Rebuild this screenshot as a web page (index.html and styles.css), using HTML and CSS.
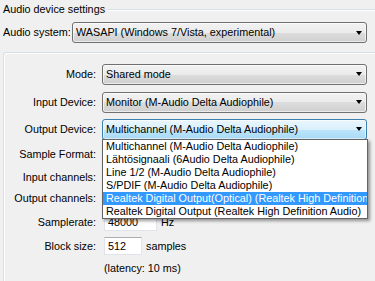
FILE: index.html
```html
<!DOCTYPE html>
<html lang="en">
<head>
    <meta charset="UTF-8">
    <title>Audio device settings</title>
    <link rel="stylesheet" href="styles.css">
</head>
<body>
    <!-- Outer group: title with etched line -->
    <div class="group-title">
        <span class="group-caption">Audio device settings</span>
        <span class="etched-line"></span>
    </div>

    <div class="system-row">
        <span class="system-label">Audio system:</span>
        <div class="combo system-combo">
            <span class="combo-text">WASAPI (Windows 7/Vista, experimental)</span>
            <span class="combo-arrow"></span>
        </div>
    </div>

    <!-- Inner group box (continues past the window edge) -->
    <div class="device-box">
        <div class="form">
            <span class="label">Mode:</span>
            <div class="combo">
                <span class="combo-text">Shared mode</span>
                <span class="combo-arrow"></span>
            </div>

            <span class="label">Input Device:</span>
            <div class="combo">
                <span class="combo-text">Monitor (M-Audio Delta Audiophile)</span>
                <span class="combo-arrow"></span>
            </div>

            <span class="label">Output Device:</span>
            <div class="combo combo-hot">
                <span class="combo-text">Multichannel (M-Audio Delta Audiophile)</span>
                <span class="combo-arrow"></span>
            </div>

            <span class="label">Sample Format:</span>
            <div class="field"></div>

            <span class="label">Input channels:</span>
            <div class="field"></div>

            <span class="label">Output channels:</span>
            <div class="field"></div>

            <span class="label">Samplerate:</span>
            <div class="field">
                <span class="textbox rate-box">48000</span>
                <span class="unit">Hz</span>
            </div>

            <span class="label">Block size:</span>
            <div class="field">
                <span class="textbox block-box">512</span>
                <span class="unit">samples</span>
            </div>

            <span class="label"></span>
            <div class="field latency">(latency: 10 ms)</div>
        </div>
    </div>

    <!-- Open dropdown of the Output Device combo -->
    <ul class="dropdown-list">
        <li>Multichannel (M-Audio Delta Audiophile)</li>
        <li>Lähtösignaali (6Audio Delta Audiophile)</li>
        <li>Line 1/2 (M-Audio Delta Audiophile)</li>
        <li>S/PDIF (M-Audio Delta Audiophile)</li>
        <li class="selected">Realtek Digital Output(Optical) (Realtek High Definition</li>
        <li>Realtek Digital Output (Realtek High Definition Audio)</li>
    </ul>
</body>
</html>
```

FILE: styles.css
```css
body {
    margin: 0;
    width: 375px;
    height: 281px;
    overflow: hidden;
    position: relative;
    background: #f0f0f0;
    color: #000;
    font-family: "Liberation Sans", Arial, sans-serif;
    font-size: 10.8px;
    line-height: 13px;
}

/* Group title with etched line */
.group-title {
    display: flex;
    align-items: center;
    height: 18px;
    padding-left: 3px;
}

.group-caption {
    white-space: nowrap;
    padding-right: 3px;
}

.etched-line {
    flex: 1;
    height: 0;
    border-top: 1px solid #d5dfe5;
    border-bottom: 1px solid #ffffff;
    margin-top: 1px;
}

/* Audio system row */
.system-row {
    display: flex;
    align-items: center;
    margin-top: 4px;
    padding-left: 3px;
}

.system-label {
    width: 69px;
    white-space: nowrap;
}

.system-combo {
    width: 295px;
}

/* Combo boxes (Windows 7 look) */
.combo {
    box-sizing: border-box;
    height: 21px;
    border: 1px solid #707070;
    border-radius: 3px;
    background: linear-gradient(to bottom, #f2f2f2 0%, #ebebeb 50%, #dddddd 50%, #cfcfcf 100%);
    display: flex;
    align-items: center;
    padding: 0 4px 0 3px;
    box-shadow: inset 0 0 0 1px rgba(255, 255, 255, 0.6);
}

.combo-hot {
    border-color: #3c7fb1;
    background: linear-gradient(to bottom, #eaf6fd 0%, #d9f0fc 50%, #bee6fd 50%, #a7d9f5 100%);
}

.combo-text {
    flex: 1;
    white-space: nowrap;
    overflow: hidden;
}

.combo-arrow {
    width: 0;
    height: 0;
    border-left: 3.5px solid transparent;
    border-right: 3.5px solid transparent;
    border-top: 4px solid #000;
    margin-left: 4px;
}

/* Inner group box, open to the right and bottom */
.device-box {
    box-sizing: border-box;
    height: 229px;
    margin-top: 9px;
    margin-left: 3px;
    border-top: 1px solid #d5dfe5;
    border-left: 1px solid #d5dfe5;
    border-top-left-radius: 3px;
    box-shadow: inset 1px 1px 0 #ffffff;
    padding-top: 7px;
}

.form {
    display: grid;
    grid-template-columns: 92px 265px;
    grid-template-rows: 28px 28px 26px 24px 22px 20px 28px 20px 24px;
    column-gap: 6px;
    align-items: center;
}

.label {
    text-align: right;
    white-space: nowrap;
}

.field {
    display: flex;
    align-items: center;
    gap: 4px;
}

.textbox {
    box-sizing: border-box;
    height: 18px;
    margin-left: 2px;
    padding: 2px 3px;
    background: #ffffff;
    border: 1px solid #e2e3ea;
    border-top-color: #abadb3;
}

.rate-box {
    width: 53px;
}

.block-box {
    width: 38px;
}

.unit {
    white-space: nowrap;
}

.latency {
    padding-left: 2px;
}

/* Open dropdown list */
.dropdown-list {
    position: absolute;
    left: 102px;
    top: 139px;
    width: 266px;
    box-sizing: border-box;
    margin: 0;
    padding: 0;
    list-style: none;
    background: #ffffff;
    border: 1px solid #646464;
    box-shadow: 2px 2px 3px rgba(0, 0, 0, 0.4);
}

.dropdown-list li {
    height: 13px;
    line-height: 13px;
    padding-left: 3px;
    white-space: nowrap;
    overflow: hidden;
}

.dropdown-list .selected {
    background: #3399ff;
    color: #ffffff;
}
```
